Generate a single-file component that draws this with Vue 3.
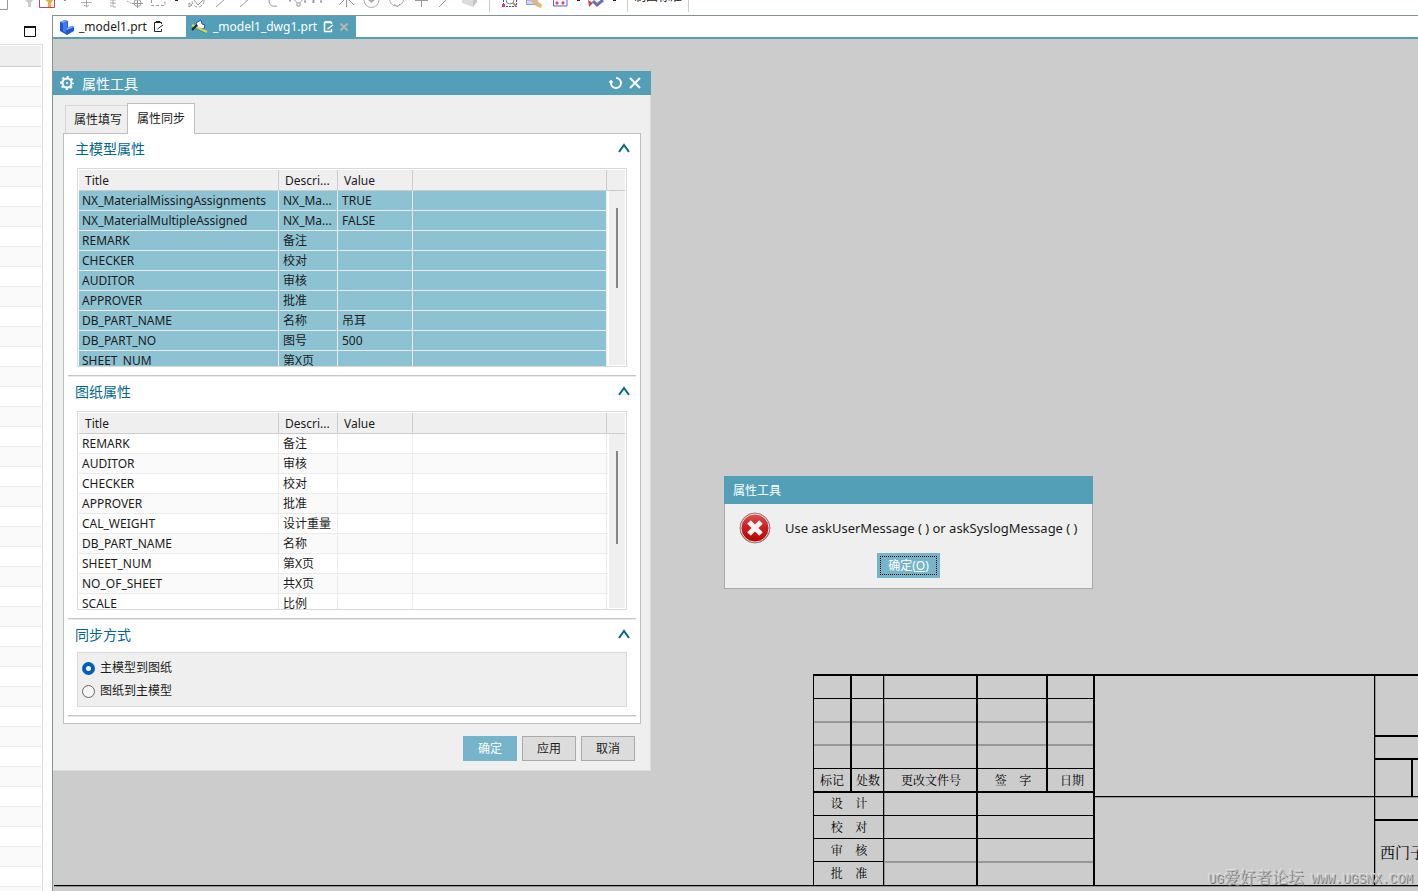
<script setup>
import { ref } from 'vue'

const direction = ref('toDrawing')
const activeTab = ref('sync')

const sections = [
  {
    title: '主模型属性',
    selected: true,
    thumb: 'thumb-short',
    rows: [
      ['NX_MaterialMissingAssignments', 'NX_Ma...', 'TRUE'],
      ['NX_MaterialMultipleAssigned', 'NX_Ma...', 'FALSE'],
      ['REMARK', '备注', ''],
      ['CHECKER', '校对', ''],
      ['AUDITOR', '审核', ''],
      ['APPROVER', '批准', ''],
      ['DB_PART_NAME', '名称', '吊耳'],
      ['DB_PART_NO', '图号', '500'],
      ['SHEET_NUM', '第X页', ''],
    ],
  },
  {
    title: '图纸属性',
    selected: false,
    thumb: 'thumb-long',
    rows: [
      ['REMARK', '备注', ''],
      ['AUDITOR', '审核', ''],
      ['CHECKER', '校对', ''],
      ['APPROVER', '批准', ''],
      ['CAL_WEIGHT', '设计重量', ''],
      ['DB_PART_NAME', '名称', ''],
      ['SHEET_NUM', '第X页', ''],
      ['NO_OF_SHEET', '共X页', ''],
      ['SCALE', '比例', ''],
    ],
  },
]
</script>

<template>
  <div class="app">
    <header class="toolbar">
      <svg class="tools" width="627" height="15" viewBox="0 0 627 15" fill="none">
        <path d="M0 9.5H7.5V0" stroke="#999" />
        <path d="M25 0h8l-2 3v4h-3V3z" fill="#ccc" />
        <path d="M39.500 0V7.500H54.500V0" stroke="#d04050" />
        <path d="M45 0h8l-2 3v4h-3V2z" fill="#e8b040" />
        <path d="M64 0h2" stroke="#222" />
        <path d="M86.500 0V7M81 2.500H92M84 5l2.500 2 2.500-2" stroke="#aaa" />
        <path d="M110 0h6M110 3h6M113 0v7h3M110 6h2" stroke="#aaa" />
        <path d="M127 1l5 3" stroke="#aaa" stroke-dasharray="2 1" />
        <circle cx="137.500" cy="3" r="3.500" stroke="#999" />
        <path d="M137.500 0v8M132 3.500h11" stroke="#999" />
        <path d="M151.500 0V5.500H165V0" stroke="#999" stroke-dasharray="3 2" />
        <path d="M175 .500h3" stroke="#222" />
        <circle cx="198" cy="1" r="6" stroke="#999" stroke-dasharray="3 2" />
        <path d="M189 3l3 2-3 2zM194 0l4 5 5-5" stroke="#999" />
        <path d="M216 7l9-8M240 7l9-8M245 0l4-1" stroke="#999" />
        <path d="M269 0c0 5 3 7 8 6" stroke="#999" />
        <path d="M289 .500h2M304 1.500h2M313.500 3v-3M320 1.500h2" stroke="#999" stroke-width="2" />
        <path d="M294.500 0l3 3h2l3-3M297 3v3h3V3" stroke="#999" />
        <path d="M339 5l6-6M346.500 0v7M348-1l6 6" stroke="#999" />
        <circle cx="371.500" cy="0" r="7.500" stroke="#aaa" />
        <path d="M368 0l3.500 3 3.500-3z" fill="#aaa" />
        <circle cx="396.500" cy="-1" r="7" stroke="#aaa" />
        <path d="M394 4l3 3 3-3" stroke="#aaa" />
        <path d="M421.500 0v7M415 .500h13M439 7l8-8" stroke="#999" />
        <path d="M462 0h11v7l-11-4z" fill="#dcdcdc" />
        <path d="M473 0h4v2l-4 5z" fill="#c4c4c4" />
        <path d="M489.500 0v12" stroke="#ccc" />
        <path d="M503.500 0V6.500H516.500V0" stroke="#3646dc" stroke-dasharray="2 1" />
        <rect x="502" y="4" width="3" height="3" fill="#d44" />
        <circle cx="510" cy="0" r="4" stroke="#888" />
        <path d="M513 3l3 3" stroke="#c69245" stroke-width="2" />
        <path d="M526.500 0V4.500H537V0z" fill="#ccd6f2" stroke="#8d9dcb" />
        <path d="M531 1l5-1 6 5-1 3-5-2z" fill="#e0b87b" />
        <path d="M553.500 0V6H567V0" stroke="#5262df" fill="#f4f5ff" />
        <path d="M556 2l2 2m0-2-2 2M562 2l2 2m0-2-2 2" stroke="#e44" stroke-width="2" />
        <path d="M577 .500h3M613 .500h3" stroke="#222" />
        <path d="M588 0l5 3-4 4z" fill="#cf4245" />
        <path d="M593 1l4 4 6-5" stroke="#6670b8" stroke-width="3" />
      </svg>
      <button class="standard" type="button">制图标准</button>
    </header>

    <div class="workspace">
      <aside class="navigator">
        <svg class="restore" width="12" height="11" viewBox="0 0 12 11">
          <path d="M.500 1v9.500h11V1" fill="none" stroke="#111" />
          <path d="M0 1h12" stroke="#111" stroke-width="2" />
        </svg>
        <div class="nav-list">
          <div class="nav-head"></div>
          <div v-for="n in 42" :key="n" class="nav-row"></div>
        </div>
      </aside>

      <main class="stage">
        <nav class="files">
          <button class="file" type="button">
            <svg width="16" height="16" viewBox="0 0 16 16">
              <path d="M1 3l5-2 3 1v6l5-1 1 1v4l-7 4-7-4z" fill="#2258cf" />
              <path d="M1 3l5-2 3 1-5 2zM7 9l6-2 2 1-7 3z" fill="#78a9fa" />
              <path d="M4 4l4-2v6l-1 2v4l-3-2z" fill="#3f7cec" />
            </svg>
            <span>_model1.prt</span>
            <svg class="clip" width="11" height="12" viewBox="0 0 11 12" fill="none" stroke="#222">
              <path d="M8.500 3V1.500h-7v9h7V8M3 1.500V.500h4v1M4.500 8L10 4" />
            </svg>
          </button>
          <button class="file current" type="button">
            <svg width="18" height="16" viewBox="0 0 18 16">
              <path d="M5 4l5-3 1 4 3 1-1 4-6-1z" fill="#fff" stroke="#2550dd" />
              <path d="M1 6l15 7" stroke="#e6d342" stroke-width="2" />
              <path d="M1 8l15 7" stroke="#24a7a0" />
              <path d="M1 11l5-5" stroke="#222" stroke-width="2" />
            </svg>
            <span>_model1_dwg1.prt</span>
            <svg class="clip" width="11" height="12" viewBox="0 0 11 12" fill="none" stroke="#fff">
              <path d="M8.500 3V1.500h-7v9h7V8M3 1.500V.500h4v1M4.500 8L10 4" stroke-width="1.500" />
            </svg>
            <svg class="close-file" width="8" height="8" viewBox="0 0 8 8">
              <path d="M.500.500l7 7m0-7l-7 7" stroke="#bbb4b0" stroke-width="2" />
            </svg>
          </button>
        </nav>

        <section class="canvas">
          <svg class="sheet" width="100%" height="100%">
            <g transform="translate(-53 -39)">
              <g stroke="#979797" stroke-width="2">
                <path d="M813 722H1094M813 745H1094M883 862H1094M54 886H3000M1094 797H3000M884 675V885M1375 675V885" />
              </g>
              <g stroke="#000" stroke-width="1">
                <path d="M813 698.500H1094M813 768.500H1094M813 815.500H1094M813 838.500H1094M54 885.500H3000M1094 796.500H3000M813.500 675V885M883.500 675V885M1374.500 675V885" />
                <path d="M813 861.500H883" />
              </g>
              <g stroke="#000" stroke-width="2">
                <path d="M813 675H3000M813 792H1094M851 675V792M977 675V885M1047 675V792M1094 675V885M1375 736H3000M1375 759H3000M1412 759V796M1375 820H3000" />
              </g>
              <g class="sheet-text">
                <text x="832" y="785">标记</text>
                <text x="868" y="785">处数</text>
                <text x="931" y="785">更改文件号</text>
                <text x="1013" y="785">签&#160;&#160;&#160;&#160;字</text>
                <text x="1072" y="785">日期</text>
                <text x="849" y="808">设&#160;&#160;&#160;&#160;计</text>
                <text x="849" y="832">校&#160;&#160;&#160;&#160;对</text>
                <text x="849" y="855">审&#160;&#160;&#160;&#160;核</text>
                <text x="849" y="878">批&#160;&#160;&#160;&#160;准</text>
              </g>
              <text class="company" x="1380" y="858">西门子</text>
            </g>
          </svg>

          <div class="watermark"><span>UG</span>爱好者论坛<span>&#160;WWW.UGSNX.COM</span></div>

          <div class="dialog props" role="dialog" aria-label="属性工具">
            <div class="props-bar">
              <svg width="14" height="14" viewBox="0 0 14 14" fill="none" stroke="#fff">
                <circle cx="7" cy="7" r="4.500" stroke-width="2" />
                <circle cx="7" cy="7" r="6" stroke-width="2" stroke-dasharray="2.200 2.512" stroke-dashoffset="1.100" />
                <circle cx="7" cy="7" r="1" fill="#fff" stroke="none" />
              </svg>
              <h1>属性工具</h1>
              <button class="bar-button" type="button" aria-label="重置">
                <svg width="14" height="14" viewBox="0 0 14 14" fill="none" stroke="#fff" stroke-width="2">
                  <path d="M7 2a5 5 0 1 1-5 5" />
                  <path d="M0 6h4M2 4v4" stroke-width="1.500" />
                </svg>
              </button>
              <button class="bar-button" type="button" aria-label="关闭">
                <svg width="12" height="12" viewBox="0 0 12 12"><path d="M1 1l10 10M11 1L1 11" stroke="#fff" stroke-width="2" /></svg>
              </button>
            </div>

            <div class="tabs">
              <button type="button" :class="['tab', { active: activeTab === 'fill' }]" @click="activeTab = 'fill'">属性填写</button>
              <button type="button" :class="['tab', { active: activeTab === 'sync' }]" @click="activeTab = 'sync'">属性同步</button>
            </div>

            <div class="pane">
              <section v-for="s in sections" :key="s.title" class="group">
                <div class="group-head">
                  <h2>{{ s.title }}</h2>
                  <button class="fold" type="button" aria-label="折叠">
                    <svg width="12" height="10" viewBox="0 0 12 10"><path d="M1 9l5-7 5 7" fill="none" stroke="#00698c" stroke-width="2" /></svg>
                  </button>
                </div>
                <div class="grid-frame">
                  <table :class="{ selected: s.selected }">
                    <colgroup><col class="c1" /><col class="c2" /><col class="c3" /><col /><col class="c5" /></colgroup>
                    <thead>
                      <tr><th>Title</th><th>Descri...</th><th>Value</th><th></th><th></th></tr>
                    </thead>
                    <tbody>
                      <tr v-for="r in s.rows" :key="r[0]">
                        <td v-for="(c, i) in r" :key="i">{{ c }}</td>
                        <td></td>
                        <td class="gutter"></td>
                      </tr>
                    </tbody>
                  </table>
                  <div class="track"><div :class="['thumb', s.thumb]"></div></div>
                </div>
              </section>

              <section class="group">
                <div class="group-head compact">
                  <h2>同步方式</h2>
                  <button class="fold" type="button" aria-label="折叠">
                    <svg width="12" height="10" viewBox="0 0 12 10"><path d="M1 9l5-7 5 7" fill="none" stroke="#00698c" stroke-width="2" /></svg>
                  </button>
                </div>
                <div class="choices">
                  <label><input v-model="direction" type="radio" name="direction" value="toDrawing" />主模型到图纸</label>
                  <label><input v-model="direction" type="radio" name="direction" value="toModel" />图纸到主模型</label>
                </div>
              </section>
            </div>

            <div class="actions">
              <button class="action primary" type="button">确定</button>
              <button class="action" type="button">应用</button>
              <button class="action" type="button">取消</button>
            </div>
          </div>

          <div class="dialog alert" role="alertdialog" aria-label="属性工具">
            <div class="alert-bar">属性工具</div>
            <div class="alert-body">
              <div class="alert-line">
                <svg width="32" height="32" viewBox="0 0 32 32">
                  <defs>
                    <linearGradient id="red" x1="0" y1="0" x2="0" y2="1">
                      <stop offset="0" stop-color="#e35454" />
                      <stop offset=".5" stop-color="#c81d1d" />
                      <stop offset="1" stop-color="#b80000" />
                    </linearGradient>
                  </defs>
                  <circle cx="16" cy="16" r="15" fill="url(#red)" stroke="#858585" />
                  <circle cx="16" cy="16" r="14" fill="none" stroke="#eedada" />
                  <path d="M10 10l12 12M22 10L10 22" stroke="#f4f4f4" stroke-width="5" />
                </svg>
                <p>Use askUserMessage ( ) or askSyslogMessage ( )</p>
              </div>
              <button class="alert-ok" type="button"><span>确定(<u>O</u>)</span></button>
            </div>
          </div>
        </section>
      </main>
    </div>
  </div>
</template>

<style>
body {
  margin: 0;
  background: #fff;
}
</style>

<style scoped>
* {
  box-sizing: border-box;
}
.app {
  height: 100vh;
  display: flex;
  flex-direction: column;
  overflow: hidden;
  background: #fff;
  color: #1c1c1c;
  font: 12px/20px "Noto Sans", "Noto Sans CJK SC", sans-serif;
}
button {
  font: inherit;
  color: inherit;
  padding: 0;
  border: 0;
  background: none;
}
svg {
  display: block;
  flex: none;
}
h1,
h2,
p {
  margin: 0;
  font-weight: 400;
}
.toolbar {
  height: 15px;
  flex: none;
  display: flex;
  align-items: flex-end;
  overflow: hidden;
}
.standard {
  height: 24px;
  padding: 0 6px 6px;
  margin-bottom: 3px;
  line-height: 18px;
  border: solid #ccc;
  border-width: 0 1px;
}
.workspace {
  flex: 1;
  min-height: 0;
  display: flex;
}
.navigator {
  width: 52px;
  flex: none;
  padding-top: 11px;
  display: flex;
  flex-direction: column;
  overflow: hidden;
}
.restore {
  margin-left: 24px;
}
.nav-list {
  flex: 1;
  min-height: 0;
  overflow: hidden;
  margin: 7px 9px 0 0;
  padding: 1px 1px 0 0;
  border-top: 1px solid #ddd;
  border-right: 1px solid #ddd;
}
.nav-head {
  height: 21px;
  background: #efefef;
  border-bottom: 1px solid #ccc;
}
.nav-row {
  height: 20px;
  border-bottom: 1px solid #e9e9e9;
}
.nav-row:nth-child(odd) {
  background: #fafafa;
}
.stage {
  flex: 1;
  min-width: 0;
  display: flex;
  flex-direction: column;
  border-left: 1px solid #849196;
  border-top: 1px solid #849196;
}
.files {
  height: 23px;
  flex: none;
  display: flex;
  border-bottom: 2px solid #539fb8;
}
.file {
  display: flex;
  align-items: center;
  width: 133px;
  padding: 0 6px;
  gap: 4px;
}
.file.current {
  width: 170px;
  padding: 0 5px;
  background: #539fb8;
  color: #fff;
}
.clip,
.close-file {
  margin-left: 2px;
}
.canvas {
  flex: 1;
  min-height: 0;
  position: relative;
  overflow: hidden;
  background: #ccc;
}
.sheet {
  position: absolute;
  inset: 0;
}
.sheet-text {
  font: 12px "Noto Serif CJK SC", "Noto Sans CJK SC", sans-serif;
  text-anchor: middle;
}
.company {
  font: 15px "Noto Serif CJK SC", "Noto Sans CJK SC", sans-serif;
}
.watermark {
  position: absolute;
  right: 5px;
  bottom: 1px;
  font: 16px/20px "Noto Serif CJK SC", "Noto Sans CJK SC", sans-serif;
  color: #bdbdbd;
  text-shadow: 1px 1px #777, -1px -1px #e4e4e4;
  white-space: nowrap;
}
.watermark span {
  font-family: "Liberation Mono", monospace;
  font-size: 13px;
}
.dialog {
  position: absolute;
  background: #efefef;
}
.props {
  left: 0;
  top: 32px;
  width: 598px;
  border: solid #dcdcdc;
  border-width: 0 1px 1px 0;
}
.props-bar {
  height: 24px;
  margin-right: -1px;
  padding: 0 10px 0 7px;
  display: flex;
  align-items: center;
  background: #539fb8;
  color: #fff;
}
.props-bar h1 {
  flex: 1;
  margin-left: 8px;
  padding-top: 1px;
  font-size: 14px;
}
.bar-button {
  margin-left: 6px;
}
.tabs {
  display: flex;
  align-items: flex-end;
  height: 38px;
  padding-left: 12px;
}
.tab {
  width: 63px;
  height: 28px;
  padding-left: 2px;
  border: 1px solid #d6d6d6;
  border-width: 1px 0 0 1px;
}
.tab.active {
  width: 68px;
  height: 31px;
  margin: 0 0 -1px -1px;
  padding: 0;
  border: 1px solid #bebebe;
  border-bottom: 0;
  background: #fff;
  z-index: 1;
}
.pane {
  margin: 0 9px 0 10px;
  padding: 0 4px 6px;
  background: #fff;
  border: 1px solid #bebebe;
}
.group {
  padding: 0 9px 8px;
  border-bottom: 1px solid #c6c6c6;
  box-shadow: 0 1px #e8e8e8;
  margin-bottom: 1px;
}
.group-head {
  height: 34px;
  padding: 5px 0 9px;
  margin: 0 -3px 0 -2px;
  display: flex;
  align-items: center;
  justify-content: space-between;
}
.group-head.compact {
  height: 32px;
  padding-bottom: 7px;
}
.group-head h2 {
  color: #00698c;
  font-size: 14px;
}
.fold {
  padding-bottom: 2px;
}
.grid-frame {
  position: relative;
  height: 199px;
  overflow: hidden;
  border: 1px solid #dadada;
}
table {
  width: calc(100% - 2px);
  margin: 1px;
  border-spacing: 0;
  table-layout: fixed;
}
.c1 {
  width: 200px;
}
.c2 {
  width: 59px;
}
.c3 {
  width: 75px;
}
.c5 {
  width: 18px;
}
th,
td {
  height: 20px;
  padding: 0 0 0 3px;
  overflow: hidden;
  white-space: nowrap;
  line-height: 19px;
  border-right: 1px solid #ebebeb;
  border-bottom: 1px solid #ebebeb;
  text-align: left;
}
th {
  height: 21px;
  padding: 1px 0 0 6px;
  font-weight: 400;
  background: #efefef;
  border-color: #ccc;
}
th:last-child {
  border-right: 0;
}
td:nth-child(2),
td:nth-child(3) {
  padding-left: 4px;
}
tbody tr:nth-child(even) td {
  background: #fafafa;
}
.selected tbody tr td {
  background: #8cc2d2;
}
tbody tr .gutter,
.selected tbody tr .gutter {
  background: #fff;
  border-right: 0;
}
.track {
  position: absolute;
  top: 22px;
  right: 1px;
  bottom: 1px;
  width: 17px;
  background: #efefef;
  border-left: 1px solid #fff;
}
.thumb {
  width: 2px;
  margin: 17px 0 0 7px;
  background: #858585;
}
.thumb-short {
  height: 80px;
}
.thumb-long {
  height: 93px;
}
.choices {
  padding: 4px;
  background: #efefef;
  border: 1px solid #dadada;
}
.choices label {
  display: flex;
  align-items: center;
  height: 22px;
}
.choices label + label {
  margin-top: 1px;
}
.choices input {
  appearance: none;
  width: 13px;
  height: 13px;
  margin: 0 5px 0 0;
  border: 1px solid #666;
  border-radius: 50%;
  background: #f5f5f5;
}
.choices input:checked {
  border: 4px solid #005fb8;
  background: #fff;
}
.actions {
  display: flex;
  justify-content: flex-end;
  gap: 5px;
  padding: 12px 15px 9px;
}
.action {
  width: 54px;
  height: 25px;
  border: 1px solid #aaa;
  background: #dcdcdc;
}
.action.primary {
  border-color: #75b4ca;
  background: #75b4ca;
  color: #fff;
}
.alert {
  left: 671px;
  top: 437px;
  width: 369px;
}
.alert-bar {
  height: 28px;
  padding: 1px 0 0 9px;
  line-height: 28px;
  background: #539fb8;
  color: #fff;
}
.alert-body {
  padding: 8px 14px 10px;
  border: 1px solid #aaa;
  border-top: 0;
  display: flex;
  flex-direction: column;
  align-items: center;
}
.alert-line {
  align-self: stretch;
  display: flex;
  align-items: center;
  gap: 14px;
  font-size: 13px;
  white-space: nowrap;
}
.alert-ok {
  width: 63px;
  height: 25px;
  margin-top: 9px;
  padding: 3px;
  background: #75b4ca;
  color: #fff;
}
.alert-ok span {
  display: block;
  border: 1px dotted #000;
  line-height: 17px;
}
</style>
